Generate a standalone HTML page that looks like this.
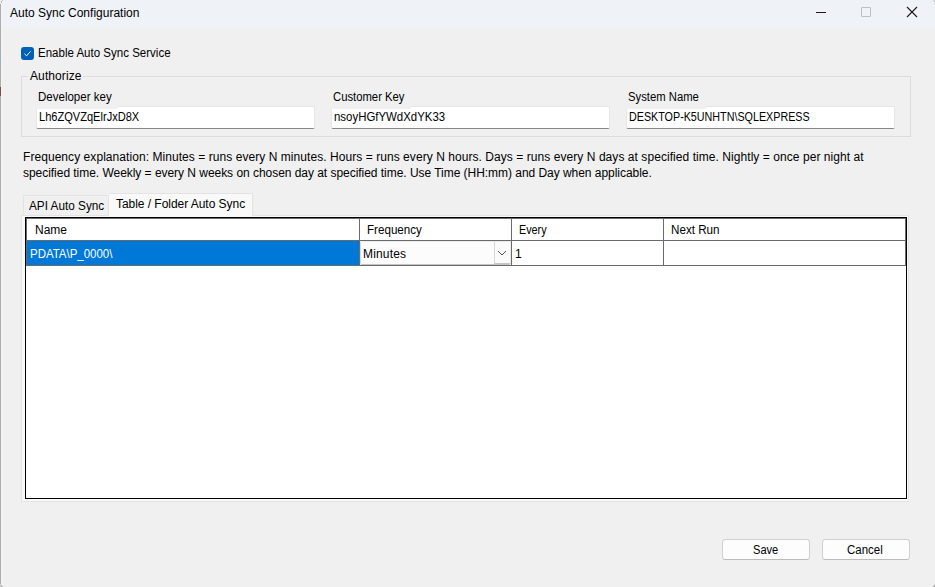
<!DOCTYPE html>
<html><head><meta charset="utf-8">
<style>
*{margin:0;padding:0;box-sizing:border-box}
html,body{width:935px;height:587px;overflow:hidden;background:#f0f0f0}
body{position:relative;font-family:"Liberation Sans",sans-serif;font-size:12px;color:#000}
.a{position:absolute}
.t{position:absolute;white-space:nowrap;line-height:normal;font-size:12px;transform-origin:0 0}
</style></head><body>
<!-- title bar -->
<div class="a" style="left:0;top:0;width:935px;height:28px;background:#eff2f7"></div>
<div class="a" style="left:0;top:28px;width:935px;height:1px;background:#eff1f3"></div>
<div class="t" style="left:10px;top:6px">Auto Sync Configuration</div>
<!-- min/max/close -->
<div class="a" style="left:816px;top:12px;width:10px;height:1px;background:#1a1a1a"></div>
<div class="a" style="left:861px;top:7px;width:10px;height:10px;border:1px solid #c0c0c0;border-radius:1px"></div>
<svg class="a" style="left:906px;top:6px" width="12" height="12" viewBox="0 0 12 12"><path d="M1 1L11 11M11 1L1 11" stroke="#1a1a1a" stroke-width="1.1" fill="none"/></svg>
<!-- window left edge -->
<div class="a" style="left:0;top:4px;width:1px;height:580px;background:#acacac"></div>
<div class="a" style="left:0;top:584px;width:1px;height:3px;background:#d0d0d0"></div>
<div class="a" style="left:1px;top:585px;width:1px;height:1px;background:#ababab"></div>
<div class="a" style="left:1px;top:586px;width:2px;height:1px;background:#c4c4c4"></div>
<div class="a" style="left:0;top:0;width:1px;height:4px;background:#ececec"></div>
<div class="a" style="left:1px;top:1px;width:1px;height:2px;background:#bdbdbd"></div>
<div class="a" style="left:2px;top:0;width:1px;height:1px;background:#c8c8c8"></div>
<div class="a" style="left:1px;top:3px;width:1px;height:582px;background:rgba(255,255,255,.35)"></div>
<div class="a" style="left:0;top:57px;width:1px;height:6px;background:#8fb3c4"></div>
<div class="a" style="left:0;top:87px;width:1px;height:9px;background:#7a4a48"></div>
<div class="a" style="left:933px;top:0;width:1px;height:1px;background:#d0d0d0"></div>
<div class="a" style="left:934px;top:0;width:1px;height:1px;background:#e0e0e0"></div>
<div class="a" style="left:934px;top:1px;width:1px;height:1px;background:#b4b4b4"></div>
<div class="a" style="left:934px;top:2px;width:1px;height:2px;background:#d8d8d8"></div>
<div class="a" style="left:934px;top:584px;width:1px;height:1px;background:#d4d4d4"></div>
<div class="a" style="left:934px;top:585px;width:1px;height:2px;background:#a8a8a8"></div>
<div class="a" style="left:933px;top:586px;width:1px;height:1px;background:#b8b8b8"></div>
<div class="a" style="left:932px;top:586px;width:1px;height:1px;background:#dcdcdc"></div>

<!-- checkbox -->
<div class="a" style="left:21px;top:47px;width:13px;height:13px;background:#005fb8;border-radius:3px"></div>
<svg class="a" style="left:21px;top:47px" width="13" height="13" viewBox="0 0 13 13"><path d="M3.5 6.8L5.6 8.8L9.6 4.3" stroke="#fff" stroke-width="1" fill="none"/></svg>
<div class="t" style="left:38px;top:46px;transform:scaleX(0.96)">Enable Auto Sync Service</div>

<!-- group box -->
<div class="a" style="left:21px;top:76px;width:890px;height:61px;border:1px solid #dcdcdc"></div>
<div class="a" style="left:28px;top:70px;width:55px;height:12px;background:#f0f0f0"></div>
<div class="t" style="left:30px;top:69px;letter-spacing:0.1px">Authorize</div>

<!-- labels + textboxes -->
<div class="a" style="left:36px;top:106px;width:279px;height:23px;background:#fff;border:1px solid #e6e6e6;border-bottom:1px solid #878787;border-radius:2px"></div>
<div class="a" style="left:35px;top:104px;width:83px;height:5px;background:#f0f0f0"></div>
<div class="t" style="left:38px;top:90px;transform:scaleX(0.96)">Developer key</div>
<div class="t" style="left:39px;top:110px;transform:scaleX(0.922)">Lh6ZQVZqElrJxD8X</div>

<div class="a" style="left:331px;top:106px;width:279px;height:23px;background:#fff;border:1px solid #e6e6e6;border-bottom:1px solid #878787;border-radius:2px"></div>
<div class="a" style="left:330px;top:104px;width:81px;height:5px;background:#f0f0f0"></div>
<div class="t" style="left:333px;top:90px;transform:scaleX(0.94)">Customer Key</div>
<div class="t" style="left:334px;top:110px;transform:scaleX(0.952)">nsoyHGfYWdXdYK33</div>

<div class="a" style="left:626px;top:106px;width:269px;height:23px;background:#fff;border:1px solid #e6e6e6;border-bottom:1px solid #878787;border-radius:2px"></div>
<div class="a" style="left:625px;top:104px;width:81px;height:5px;background:#f0f0f0"></div>
<div class="t" style="left:628px;top:90px;transform:scaleX(0.94)">System Name</div>
<div class="t" style="left:629px;top:110px;transform:scaleX(0.895)">DESKTOP-K5UNHTN\SQLEXPRESS</div>

<!-- explanation -->
<div class="t" style="left:23px;top:149px;line-height:16px;letter-spacing:0.058px">Frequency explanation: Minutes = runs every N minutes. Hours = runs every N hours. Days = runs every N days at specified time. Nightly = once per night at</div>
<div class="t" style="left:23px;top:165px;line-height:16px;letter-spacing:-0.038px">specified time. Weekly = every N weeks on chosen day at specified time. Use Time (HH:mm) and Day when applicable.</div>

<!-- tabs -->
<div class="a" style="left:23px;top:195px;width:86px;height:21px;background:#f0f0f0;border:1px solid #e3e3e3;border-bottom:none"></div>
<div class="t" style="left:29px;top:199px;transform:scaleX(0.98)">API Auto Sync</div>
<div class="a" style="left:21px;top:215px;width:888px;height:287px;background:#f9f9f9;border:1px solid #e3e3e3"></div>
<div class="a" style="left:109px;top:193px;width:144px;height:23px;background:#f9f9f9;border:1px solid #e3e3e3;border-bottom:none;border-left:none"></div>
<div class="t" style="left:116px;top:197px;letter-spacing:-0.04px">Table / Folder Auto Sync</div>

<!-- grid -->
<div class="a" style="left:25px;top:217px;width:882px;height:282px;background:#fff;border:1px solid #000"></div>
<div class="a" style="left:26px;top:240px;width:880px;height:1px;background:#6a6a6a"></div>
<div class="a" style="left:26px;top:265px;width:880px;height:1px;background:#6a6a6a"></div>
<div class="a" style="left:27px;top:241px;width:332px;height:24px;background:#0078d7"></div>
<div class="a" style="left:26px;top:218px;width:880px;height:1px;background:#6a6a6a"></div>
<div class="a" style="left:26px;top:218px;width:1px;height:48px;background:#6a6a6a"></div>
<div class="a" style="left:359px;top:218px;width:1px;height:48px;background:#6a6a6a"></div>
<div class="a" style="left:511px;top:218px;width:1px;height:48px;background:#6a6a6a"></div>
<div class="a" style="left:663px;top:218px;width:1px;height:48px;background:#6a6a6a"></div>
<div class="a" style="left:905px;top:218px;width:1px;height:48px;background:#6a6a6a"></div>
<div class="t" style="left:35px;top:223px">Name</div>
<div class="t" style="left:367px;top:223px;transform:scaleX(0.968)">Frequency</div>
<div class="t" style="left:519px;top:223px;transform:scaleX(0.9)">Every</div>
<div class="t" style="left:671px;top:223px;transform:scaleX(0.97)">Next Run</div>
<div class="t" style="left:30px;top:247px;color:#fff;transform:scaleX(0.955)">PDATA\P_0000\</div>
<!-- combo -->
<div class="a" style="left:360px;top:241px;width:151px;height:24px;background:#fcfcfc;border:1px solid #ececec;border-left-color:#d8d8d8;border-bottom-color:#c4c4c4;border-radius:2px"></div>
<div class="a" style="left:494px;top:241px;width:17px;height:23px;background:#fbfbfb;border:1px solid #ececec;border-left-color:#d6d6d6;border-bottom:1px solid #c6c6c6"></div>
<svg class="a" style="left:494px;top:241px" width="17" height="24" viewBox="0 0 17 24"><path d="M4 10L8 14L12 10" stroke="#555" stroke-width="1" fill="none"/></svg>
<div class="t" style="left:363px;top:247px;letter-spacing:0.17px">Minutes</div>
<div class="t" style="left:515px;top:247px">1</div>

<!-- buttons -->
<div class="a" style="left:722px;top:539px;width:88px;height:21px;background:#fdfdfd;border:1px solid #d0d0d0;border-bottom-color:#bcbcbc;border-radius:3.5px"></div>
<div class="t" style="left:753px;top:543px;transform:scaleX(0.923)">Save</div>
<div class="a" style="left:822px;top:539px;width:88px;height:21px;background:#fdfdfd;border:1px solid #d0d0d0;border-bottom-color:#bcbcbc;border-radius:3.5px"></div>
<div class="t" style="left:847px;top:543px;transform:scaleX(0.955)">Cancel</div>
</body></html>
